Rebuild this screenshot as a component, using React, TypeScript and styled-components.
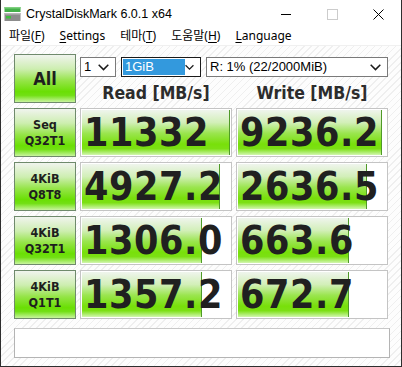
import styled, { createGlobalStyle } from "styled-components";

const GlobalStyle = createGlobalStyle`
  html, body {
    margin: 0;
    padding: 0;
    background: #ffffff;
  }
  body {
    width: 402px;
    height: 367px;
    overflow: hidden;
    font-family: "Noto Sans", "Noto Sans CJK KR", sans-serif;
  }
`;

type Result = {
  top: string;
  bottom: string;
  read: string;
  write: string;
  readPct: number;
  writePct: number;
};

const results: Result[] = [
  { top: "Seq", bottom: "Q32T1", read: "11332", write: "9236.2", readPct: 100, writePct: 97.5 },
  { top: "4KiB", bottom: "Q8T8", read: "4927.2", write: "2636.5", readPct: 93.5, writePct: 87.5 },
  { top: "4KiB", bottom: "Q32T1", read: "1306.0", write: "663.6", readPct: 81.5, writePct: 75.5 },
  { top: "4KiB", bottom: "Q1T1", read: "1357.2", write: "672.7", readPct: 81.5, writePct: 75.5 },
];

const Window = styled.div`
  width: 402px;
  height: 367px;
  box-sizing: border-box;
  border-left: 1px solid #2e2e2e;
  border-right: 1px solid #2e2e2e;
  border-bottom: 1px solid #2e2e2e;
  display: flex;
  flex-direction: column;
  background: #ffffff;
`;

const TitleBar = styled.div`
  height: 28px;
  display: flex;
  align-items: center;
  padding-left: 3px;
`;

const Title = styled.span`
  margin-left: 5px;
  font-family: "Liberation Sans", "Noto Sans", sans-serif;
  font-size: 12.5px;
  color: #000;
  flex: 1;
`;

const Controls = styled.div`
  display: flex;
  align-items: center;
  height: 28px;
`;

const ControlButton = styled.div<{ $disabled?: boolean }>`
  width: 46px;
  height: 28px;
  display: flex;
  align-items: center;
  justify-content: center;
  color: ${(p) => (p.$disabled ? "#cccccc" : "#000000")};
`;

const MenuBar = styled.div`
  height: 17px;
  display: flex;
  align-items: flex-start;
  gap: 15px;
  padding-left: 8px;
  font-size: 12px;
  color: #000;
  border-bottom: 1px solid #f0f0f0;
  line-height: 16px;
`;

const MenuItem = styled.span`
  u {
    text-decoration-thickness: 1px;
    text-underline-offset: 2px;
  }
`;

const Content = styled.div`
  flex: 1;
  padding: 8px 12px 0 13px;
  background: repeating-linear-gradient(
    135deg,
    #fdfdfd 0px,
    #fdfdfd 4px,
    #efefef 4px,
    #efefef 5px
  );
`;

const Grid = styled.div`
  display: grid;
  grid-template-columns: 62px 152px 152px;
  grid-auto-rows: 49px;
  column-gap: 4px;
  row-gap: 5px;
`;

const LabelButton = styled.div<{ $big?: boolean }>`
  box-sizing: border-box;
  border: 1px solid #6f8a6c;
  background: linear-gradient(
    to bottom,
    #f0f4ee 0%,
    #cdeeb0 30%,
    #94e446 55%,
    #6adf04 78%,
    #72e014 86%,
    #c8f49e 100%
  );
  display: flex;
  align-items: center;
  justify-content: center;
  text-align: center;
  font-family: "DejaVu Sans Condensed", "DejaVu Sans", sans-serif;
  font-stretch: condensed;
  font-weight: bold;
  font-size: ${(p) => (p.$big ? "18px" : "12.5px")};
  line-height: ${(p) => (p.$big ? "1" : "1.22")};
  color: #1e1e1e;
`;

const TopPanel = styled.div`
  grid-column: 2 / 4;
  display: flex;
  flex-direction: column;
`;

const SelectRow = styled.div`
  margin-top: 3px;
  display: flex;
  gap: 5px;
  height: 20px;
`;

const Select = styled.div<{ $w: number; $focused?: boolean }>`
  box-sizing: border-box;
  width: ${(p) => p.$w}px;
  height: 20px;
  border: 1px solid ${(p) => (p.$focused ? "#1a1a1a" : "#7a7a7a")};
  background: #fff;
  display: flex;
  align-items: center;
  padding: 0 6px 0 ${(p) => (p.$focused ? "1px" : "3px")};
  font-family: "Liberation Sans", "Noto Sans", sans-serif;
  font-size: 13px;
  color: #000;
`;

const SelectValue = styled.span<{ $selected?: boolean }>`
  flex: ${(p) => (p.$selected ? "0 0 60px" : "1")};
  height: 16px;
  line-height: 16px;
  padding-left: ${(p) => (p.$selected ? "2px" : "0")};
  background: ${(p) => (p.$selected ? "#3399dd" : "transparent")};
  color: ${(p) => (p.$selected ? "#ffffff" : "#000000")};
  margin-right: auto;
`;

const HeaderRow = styled.div`
  display: grid;
  grid-template-columns: 152px 152px;
  column-gap: 4px;
  margin-top: 6px;
`;

const Header = styled.div`
  text-align: center;
  font-family: "DejaVu Sans Condensed", "DejaVu Sans", sans-serif;
  font-stretch: condensed;
  font-weight: bold;
  font-size: 17.5px;
  color: #2c2c2c;
  line-height: 20px;
`;

const Meter = styled.div`
  position: relative;
  box-sizing: border-box;
  border: 1px solid #c4c4c4;
  background: #ffffff;
  overflow: hidden;
`;

const MeterFill = styled.div`
  position: absolute;
  top: 1px;
  bottom: 1px;
  left: 1px;
  box-sizing: border-box;
  border-right: 1px solid #4f9a28;
  background: linear-gradient(
    to bottom,
    #eff5ed 0%,
    #d2efb8 28%,
    #9ae54e 52%,
    #78e00a 76%,
    #7ce014 86%,
    #d2f6b0 100%
  );
`;

const MeterValue = styled.div`
  position: relative;
  height: 100%;
  display: flex;
  align-items: center;
  padding-left: 3px;
  font-family: "DejaVu Sans Condensed", "DejaVu Sans", sans-serif;
  font-stretch: condensed;
  font-weight: bold;
  font-size: 39px;
  letter-spacing: 0.6px;
  color: #202020;
  white-space: nowrap;
`;

const Comment = styled.div`
  margin-top: 9px;
  height: 30px;
  box-sizing: border-box;
  border: 1px solid #b4b4b4;
  border-top-color: #c8c8c8;
  background: #ffffff;
  width: 376px;
`;

function AppIcon() {
  return (
    <svg width="17" height="16" viewBox="0 0 17 16">
      <rect x="0.5" y="1" width="16" height="5" fill="#44b04a" />
      <rect x="0.5" y="1" width="16" height="1.5" fill="#7fd07f" />
      <rect x="0.5" y="7" width="16" height="8" fill="#8c8c8c" />
      <rect x="0.5" y="7" width="16" height="1.5" fill="#b8b8b8" />
      <rect x="2" y="10" width="5" height="2.5" fill="#3fbf3f" />
    </svg>
  );
}

function Chevron() {
  return (
    <svg width="11" height="7" viewBox="0 0 11 7">
      <path d="M0.7 0.8 L5.5 5.6 L10.3 0.8" fill="none" stroke="#1a1a1a" strokeWidth="1.5" />
    </svg>
  );
}

function Cell({ value, pct }: { value: string; pct: number }) {
  return (
    <Meter>
      <MeterFill style={{ width: `calc(${pct}% - 2px)` }} />
      <MeterValue>{value}</MeterValue>
    </Meter>
  );
}

function Row({ r }: { r: Result }) {
  return (
    <>
      <LabelButton>
        {r.top}
        <br />
        {r.bottom}
      </LabelButton>
      <Cell value={r.read} pct={r.readPct} />
      <Cell value={r.write} pct={r.writePct} />
    </>
  );
}

export default function App() {
  return (
    <>
      <GlobalStyle />
      <Window>
        <TitleBar>
          <AppIcon />
          <Title>CrystalDiskMark 6.0.1 x64</Title>
          <Controls>
            <ControlButton>
              <svg width="11" height="11" viewBox="0 0 11 11">
                <path d="M0 5.5 H10" stroke="currentColor" strokeWidth="1" />
              </svg>
            </ControlButton>
            <ControlButton $disabled>
              <svg width="11" height="11" viewBox="0 0 11 11">
                <rect x="0.5" y="0.5" width="10" height="10" fill="none" stroke="currentColor" />
              </svg>
            </ControlButton>
            <ControlButton>
              <svg width="11" height="11" viewBox="0 0 11 11">
                <path d="M0.5 0.5 L10.5 10.5 M10.5 0.5 L0.5 10.5" stroke="currentColor" strokeWidth="1" />
              </svg>
            </ControlButton>
          </Controls>
        </TitleBar>
        <MenuBar>
          <MenuItem>
            파일(<u>F</u>)
          </MenuItem>
          <MenuItem>
            <u>S</u>ettings
          </MenuItem>
          <MenuItem>
            테마(<u>T</u>)
          </MenuItem>
          <MenuItem>
            도움말(<u>H</u>)
          </MenuItem>
          <MenuItem>
            <u>L</u>anguage
          </MenuItem>
        </MenuBar>
        <Content>
          <Grid>
            <LabelButton $big>All</LabelButton>
            <TopPanel>
              <SelectRow>
                <Select $w={36}>
                  <SelectValue>1</SelectValue>
                  <Chevron />
                </Select>
                <Select $w={80} $focused>
                  <SelectValue $selected>1GiB</SelectValue>
                  <Chevron />
                </Select>
                <Select $w={182}>
                  <SelectValue>R: 1% (22/2000MiB)</SelectValue>
                  <Chevron />
                </Select>
              </SelectRow>
              <HeaderRow>
                <Header>Read [MB/s]</Header>
                <Header>Write [MB/s]</Header>
              </HeaderRow>
            </TopPanel>
            {results.map((r, i) => (
              <Row key={i} r={r} />
            ))}
          </Grid>
          <Comment />
        </Content>
      </Window>
    </>
  );
}
